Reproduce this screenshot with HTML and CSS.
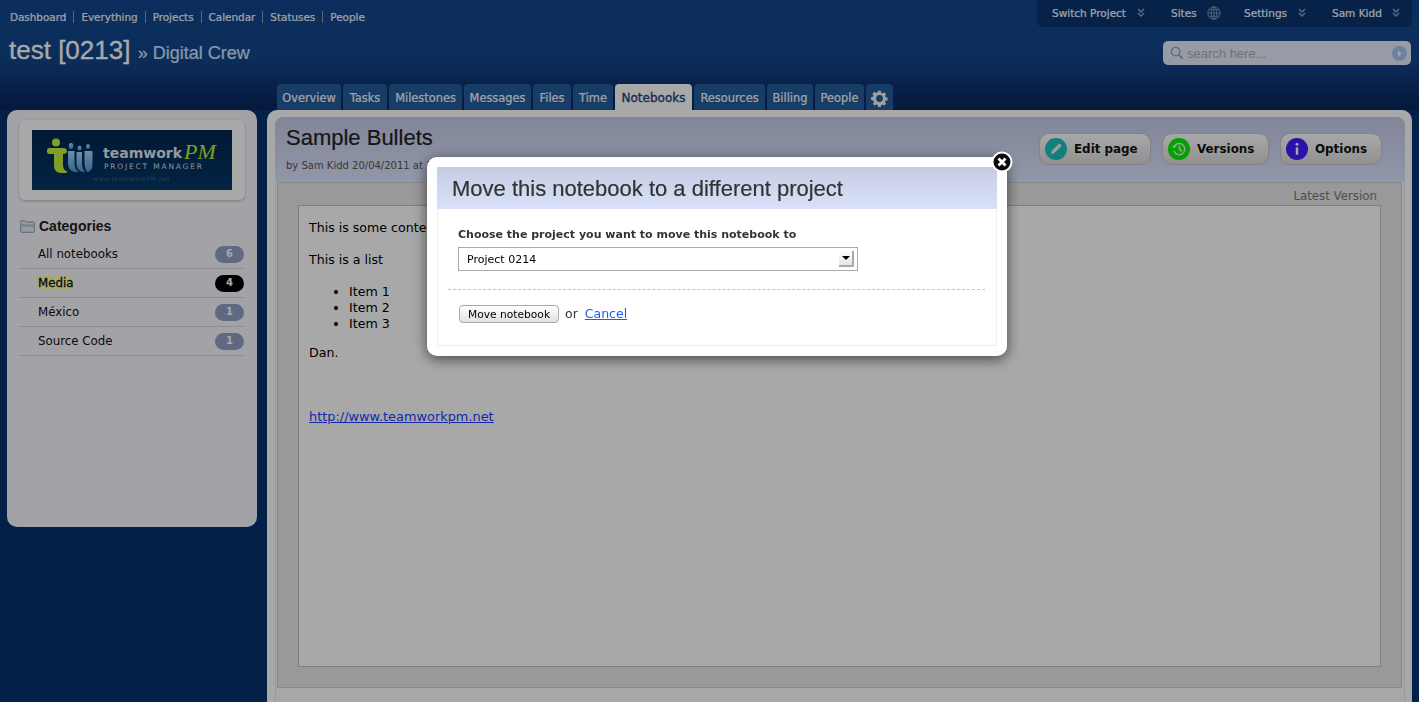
FILE: index.html
```html
<!DOCTYPE html>
<html lang="en">
<head>
<meta charset="utf-8">
<title>Move notebook</title>
<link rel="stylesheet" href="styles.css">
</head>
<body>
<div class="page">
  <header class="header">
    <div class="header-left">
      <nav class="topnav">
        <a>Dashboard</a><a>Everything</a><a>Projects</a><a>Calendar</a><a>Statuses</a><a>People</a>
      </nav>
      <div class="title">test [0213] <span class="title-sub">» Digital Crew</span></div>
    </div>
    <div class="header-right">
      <div class="userbar">
        <span class="ub ub-switch">Switch Project<svg class="chev" viewBox="0 0 8 10"><path d="M1 1l3 3 3-3M1 5l3 3 3-3" fill="none" stroke="#cfd6e2" stroke-width="1.4"/></svg></span>
        <span class="ub ub-sites">Sites<svg class="globe" viewBox="0 0 14 14"><g fill="none" stroke="#c2cad8" stroke-width=".8"><circle cx="7" cy="7" r="6.2"/><ellipse cx="7" cy="7" rx="2.8" ry="6.2"/><path d="M7 .8v12.4M.8 7h12.4M1.7 3.8h10.6M1.7 10.2h10.6"/></g></svg></span>
        <span class="ub ub-settings">Settings<svg class="chev" viewBox="0 0 8 10"><path d="M1 1l3 3 3-3M1 5l3 3 3-3" fill="none" stroke="#cfd6e2" stroke-width="1.4"/></svg></span>
        <span class="ub ub-user">Sam Kidd<svg class="chev" viewBox="0 0 8 10"><path d="M1 1l3 3 3-3M1 5l3 3 3-3" fill="none" stroke="#cfd6e2" stroke-width="1.4"/></svg></span>
      </div>
      <div class="search">
        <svg class="search-icon" viewBox="0 0 14 14"><circle cx="5.6" cy="5.6" r="4.3" fill="none" stroke="#8fa3c4" stroke-width="1.3"/><path d="M8.8 8.8l4 4" stroke="#8fa3c4" stroke-width="1.8"/></svg>
        <span class="search-text">search here...</span>
        <svg class="search-go" viewBox="0 0 14 14"><circle cx="7" cy="7" r="7" fill="#a7c2f2"/><path d="M5.6 4l3.4 3-3.4 3z" fill="#fff"/></svg>
      </div>
    </div>
  </header>

  <nav class="tabs">
    <a class="tab">Overview</a>
    <a class="tab">Tasks</a>
    <a class="tab">Milestones</a>
    <a class="tab">Messages</a>
    <a class="tab">Files</a>
    <a class="tab">Time</a>
    <a class="tab tab-active">Notebooks</a>
    <a class="tab">Resources</a>
    <a class="tab">Billing</a>
    <a class="tab">People</a>
    <a class="tab tab-gear"><svg viewBox="0 0 20 20"><path fill="#eef3fb" fill-rule="evenodd" d="M8.4 1h3.2l.5 2.4 1.5.6 2-1.3 2.2 2.2-1.3 2 .6 1.5 2.4.5v3.2l-2.4.5-.6 1.5 1.3 2-2.2 2.2-2-1.3-1.5.6-.5 2.4H8.4l-.5-2.4-1.5-.6-2 1.3-2.2-2.2 1.3-2-.6-1.5L0 11.6V8.4l2.4-.5.6-1.5-1.3-2 2.2-2.2 2 1.3 1.5-.6zM10 6a4 4 0 1 0 0 8 4 4 0 0 0 0-8z"/></svg></a>
  </nav>

  <main class="main">
    <aside class="sidebar">
      <div class="logo-card">
        <svg class="logo" viewBox="0 0 200 60">
          <defs>
            <linearGradient id="logobg" x1="0" y1="0" x2="0" y2="1"><stop offset="0" stop-color="#022650"/><stop offset="1" stop-color="#043766"/></linearGradient>
            <linearGradient id="logoblue" x1="0" y1="0" x2="0" y2="1"><stop offset="0" stop-color="#a8dcff"/><stop offset="1" stop-color="#4f98d0"/></linearGradient>
          </defs>
          <rect width="200" height="60" fill="url(#logobg)"/>
          <g fill="#bff03c">
            <circle cx="24" cy="12.5" r="4"/>
            <path d="M17 18h14c2.5 0 4 1 4 3s-1.5 3-4 3v11c0 3.5 1.5 5.5 4 6.5V43h-6c-4.5 0-7-3-7-7.5V24h-5c-1.500 0-2-1.500-2-3s.5-3 2-3z"/>
          </g>
          <g fill="url(#logoblue)">
            <ellipse cx="39" cy="16" rx="2.3" ry="3"/><ellipse cx="47.5" cy="18" rx="2" ry="2.6"/><ellipse cx="56" cy="16.5" rx="2" ry="2.6"/>
            <path d="M36 21h6.500v12c0 4 1.500 7 4 9h-3c-4.500 0-7.500-3.500-7.500-9z"/>
            <path d="M44.500 22h5.500v11c0 4 1 7 3 9h-1.500c-4 0-7-3.500-7-9z"/>
            <path d="M52.500 21h7c.5 0 1 .5 1 1v13c0 4-2.500 7-5.500 7-1.500-2.500-2.500-5-2.500-9z"/>
          </g>
          <text class="logo-main" x="71" y="28">teamwork</text>
          <text class="logo-pm" x="152" y="29">PM</text>
          <text class="logo-sub" x="72" y="39">PROJECT MANAGER</text>
          <text class="logo-url" x="61" y="51">www.teamworkPM.net</text>
        </svg>
      </div>
      <h2 class="cat-title">
        <svg class="folder" viewBox="0 0 15 13"><path d="M.7 3V1.600c0-.5.4-.9.9-.9h3.200l1.200 1.300h7.400c.5 0 .9.400.9.900v8.700c0 .5-.4.700-.9.700H1.600c-.5 0-.9-.3-.9-.7z" fill="#e6ecf4" stroke="#7fa0b4"/><path d="M1 4h13v3H1z" fill="#c3ccd8"/></svg>
        Categories
      </h2>
      <ul class="cat-list">
        <li class="cat"><span class="cat-name">All notebooks</span><span class="badge">6</span></li>
        <li class="cat"><span class="cat-name cat-current">Media</span><span class="badge badge-on">4</span></li>
        <li class="cat"><span class="cat-name">México</span><span class="badge">1</span></li>
        <li class="cat"><span class="cat-name">Source Code</span><span class="badge">1</span></li>
      </ul>
    </aside>

    <section class="content">
      <div class="content-head">
        <div>
          <h1 class="page-title">Sample Bullets</h1>
          <p class="byline">by Sam Kidd 20/04/2011 at 10:12</p>
        </div>
        <div class="actions">
          <a class="action"><svg class="action-icon" viewBox="0 0 22 22"><circle cx="11" cy="11" r="11" fill="#17c2b9"/><path d="M6 16.200l1-3.600 6.400-6.400c.6-.6 1.400-.6 2 0l.5.5c.6.6.6 1.400 0 2L9.500 15.100z" fill="#e9f5f3"/></svg>Edit page</a>
          <a class="action"><svg class="action-icon" viewBox="0 0 22 22"><circle cx="11" cy="11" r="11" fill="#06f206"/><g fill="none" stroke="#e2fbe2" stroke-width="1.500"><path d="M6.500 8a5.600 5.600 0 1 1-.6 5"/><path d="M11.500 7.500V11.500l2.500 1.500"/></g><path d="M4 7.500h5l-3 3z" fill="#e2fbe2"/></svg>Versions</a>
          <a class="action"><svg class="action-icon" viewBox="0 0 22 22"><circle cx="11" cy="11" r="11" fill="#3f1cff"/><circle cx="11" cy="6.300" r="1.500" fill="#fff"/><path d="M9.800 9.300h2.400v7.500H9.800z" fill="#fff"/></svg>Options</a>
        </div>
      </div>
      <div class="doc-wrap">
        <div class="doc-outer">
          <div class="latest">Latest Version</div>
          <article class="doc">
            <p>This is some content</p>
            <p>This is a list</p>
            <ul>
              <li>Item 1</li>
              <li>Item 2</li>
              <li>Item 3</li>
            </ul>
            <p>Dan.</p>
            <p class="doc-link"><a href="#">http://www.teamworkpm.net</a></p>
          </article>
        </div>
      </div>
    </section>
  </main>
</div>

<div class="overlay"></div>

<div class="dialog">
  <svg class="dialog-close" viewBox="0 0 22 22"><circle cx="11" cy="11" r="9.500" fill="#0a0a0a" stroke="#fff" stroke-width="2"/><path d="M7.500 7.500l7 7M14.500 7.500l-7 7" stroke="#fff" stroke-width="2.800"/></svg>
  <div class="dialog-inner">
    <h2 class="dialog-title">Move this notebook to a different project</h2>
    <div class="dialog-body">
      <label class="dialog-label" for="proj">Choose the project you want to move this notebook to</label>
      <div class="select-wrap">
        <select class="select" id="proj"><option>Project 0214</option></select>
        <span class="select-arrow"></span>
      </div>
    </div>
    <div class="dialog-foot">
      <button class="btn" type="button">Move notebook</button>
      <span class="or">or</span>
      <a class="cancel" href="#">Cancel</a>
    </div>
  </div>
</div>
</body>
</html>
```

FILE: styles.css
```css
* { box-sizing: border-box; }
html, body { margin: 0; padding: 0; height: 100%; }
body {
  overflow: hidden;
  font-family: "DejaVu Sans", sans-serif;
  font-size: 12px;
  color: #000;
  background: #05316f;
}
.page {
  height: 702px;
  display: flex;
  flex-direction: column;
  background: linear-gradient(#13478f 0, #124589 60px, #092b62 100px, #09275a 110px, #05316f 110px);
}

/* header */
.header { display: flex; justify-content: space-between; height: 84px; flex: none; }
.header-left { padding-left: 10px; }
.topnav {
  display: flex;
  padding-top: 11px;
  font-size: 10.4px;
  line-height: 12px;
  color: #f2f6ff;
  -webkit-text-stroke: .2px #f2f6ff;
}
.topnav a { padding-right: 7px; margin-right: 7px; border-right: 1px solid #8a9ab8; }
.topnav a:last-child { border-right: 0; }
.title {
  margin: 11px 0 0 -1px;
  font-family: "Liberation Sans", sans-serif;
  font-size: 26px;
  line-height: 32px;
  color: #fff;
  -webkit-text-stroke: .3px #fff;
}
.title-sub { font-size: 18px; color: #d2e4ff; -webkit-text-stroke: .2px #d2e4ff; }
.header-right { width: 375px; margin-right: 7px; display: flex; flex-direction: column; align-items: flex-end; }
.userbar {
  width: 375px;
  height: 27px;
  flex: none;
  display: flex;
  align-items: center;
  padding-bottom: 2px;
  background: #0b3470;
  border-radius: 0 0 6px 6px;
  font-size: 10.5px;
  color: #f4f8ff;
  -webkit-text-stroke: .2px #f4f8ff;
}
.ub { display: flex; align-items: center; }
.ub-switch { margin-left: 15px; width: 119px; }
.ub-sites { width: 73px; }
.ub-settings { width: 88px; }
.ub .chev { width: 8px; height: 10px; margin-left: auto; margin-right: 26px; opacity: .7; }
.ub-user { flex: 1; }
.ub-user .chev { margin-right: 12px; }
.globe { width: 14px; height: 14px; margin-left: 10px; opacity: .75; }
.search {
  width: 248px;
  height: 24px;
  margin-top: 14px;
  margin-right: 1px;
  display: flex;
  align-items: center;
  background: #e6ebfa;
  border-radius: 5px;
  padding: 0 4px 0 7px;
  font-family: "Liberation Sans", sans-serif;
  font-size: 13px;
  color: #ababab;
}
.search-icon { width: 14px; height: 14px; margin-right: 3px; }
.search-text { flex: 1; }
.search-go { width: 15px; height: 15px; }

/* tabs */
.tabs { display: flex; gap: 2px; height: 26px; flex: none; margin-left: 277px; }
.tab {
  display: flex;
  align-items: center;
  justify-content: center;
  padding-top: 2px;
  border-radius: 4px 4px 0 0;
  background: #245b9b;
  color: #f4f8ff;
  font-size: 11.4px;
  -webkit-text-stroke: .2px #f4f8ff;
}
.tab:nth-child(1) { width: 64px; }
.tab:nth-child(2) { width: 44px; }
.tab:nth-child(3) { width: 73px; }
.tab:nth-child(4) { width: 67px; }
.tab:nth-child(5) { width: 38px; }
.tab:nth-child(6) { width: 40px; }
.tab:nth-child(7) { width: 77px; }
.tab:nth-child(8) { width: 71px; }
.tab:nth-child(9) { width: 46px; }
.tab:nth-child(10) { width: 49px; }
.tab-active {
  background: #fff;
  color: #1b447c;
  font-size: 12px;
  -webkit-text-stroke: .35px #1b447c;
}
.tab-gear { width: 27px; }
.tab-gear svg { width: 17px; height: 17px; }

/* main */
.main { flex: 1; display: flex; align-items: flex-start; gap: 10px; padding: 0 7px; min-height: 0; }
.sidebar {
  width: 250px;
  height: 417px;
  flex: none;
  background: #f6f6fe;
  border-radius: 10px;
  padding: 10px 13px 10px 12px;
}
.logo-card {
  width: 226px;
  height: 80px;
  padding: 10px 13px;
  background: #fff;
  border-radius: 6px;
  box-shadow: 0 1px 3px rgba(0, 0, 0, .25);
}
.logo { display: block; width: 200px; height: 60px; }
.logo-main { font: bold 14px "DejaVu Sans", sans-serif; fill: #e3e9ef; }
.logo-pm { font: italic 22px "Liberation Serif", serif; fill: #bff03c; }
.logo-sub { font: 7.5px "DejaVu Sans", sans-serif; fill: #d5dde6; letter-spacing: 1.8px; }
.logo-url { font: 6px "DejaVu Sans", sans-serif; fill: #2f6488; letter-spacing: .6px; }
.cat-title {
  display: flex;
  align-items: center;
  gap: 5px;
  margin: 18px 0 0 1px;
  height: 16px;
  font: bold 14px "Liberation Sans", sans-serif;
  color: #222;
}
.folder { width: 15px; height: 13px; margin-right: -1px; }
.cat-list { list-style: none; margin: 6px 0 0; padding: 0; font-size: 11.8px; }
.cat {
  display: flex;
  justify-content: space-between;
  align-items: center;
  height: 29px;
  padding-left: 19px;
  border-bottom: 1px dotted #b9b9c2;
  color: #111;
}
.cat-current { background: #ffffb4; -webkit-text-stroke: .3px #111; }
.badge {
  width: 29px;
  height: 17px;
  border-radius: 9px;
  background: #90a0c5;
  color: #fff;
  font-size: 10px;
  font-weight: bold;
  line-height: 15px;
  text-align: center;
}
.badge-on { background: #000; }

/* content */
.content {
  flex: 1;
  height: 620px;
  display: flex;
  flex-direction: column;
  padding: 7px 7px 0 8px;
  background: #fff;
  border-radius: 10px 10px 0 0;
}
.content-head {
  height: 65px;
  flex: none;
  display: flex;
  justify-content: space-between;
  padding: 7px 23px 0 11px;
  background: linear-gradient(#c5cbe6, #dce6ff);
  border-radius: 8px 8px 0 0;
}
.page-title {
  margin: 0;
  font: 22px/27px "Liberation Sans", sans-serif;
  color: #222;
  -webkit-text-stroke: .2px #222;
}
.byline { margin: 9px 0 0; font-size: 10px; color: #555; }
.actions { display: flex; gap: 11px; padding-top: 9px; }
.action {
  height: 32px;
  display: flex;
  align-items: center;
  gap: 7px;
  padding-left: 5px;
  background: linear-gradient(#fff, #dcdcdc);
  border: 1px solid #c5c5cc;
  border-radius: 10px;
  font-size: 11.9px;
  font-weight: bold;
  color: #111;
}
.action:nth-child(1) { width: 112px; }
.action:nth-child(2) { width: 107px; }
.action:nth-child(3) { width: 102px; }
.action-icon { width: 22px; height: 22px; }
.doc-wrap { flex: 1; padding: 0 2px 0 1px; border: 1px solid #e6e6ee; border-top: 0; min-height: 0; }
.doc-outer {
  height: 506px;
  padding: 0 20px 20px;
  background: #e8e8e8;
  border: 1px solid #cfcfcf;
  display: flex;
  flex-direction: column;
}
.latest { height: 22px; line-height: 26px; padding-right: 4px; text-align: right; font-size: 11.8px; color: #777; }
.doc {
  flex: 1;
  padding: 14px 10px;
  background: #fff;
  border: 1px solid #bfbfbf;
  line-height: 16px;
  font-size: 12.6px;
}
.doc p { margin: 0 0 16px; }
.doc ul { margin: 0 0 13px; padding-left: 40px; }
.doc-link { padding-top: 32px; font-size: 12.9px; }
.doc a { color: #1f3cff; }

/* overlay + dialog */
.overlay { position: fixed; inset: 0; background: rgba(0, 0, 0, .34); }
.dialog {
  position: fixed;
  left: 427px;
  top: 157px;
  width: 580px;
  height: 199px;
  padding: 10px;
  background: #fff;
  border-radius: 10px;
  box-shadow: 0 3px 14px rgba(0, 0, 0, .6);
}
.dialog-close { position: absolute; right: -6px; top: -6px; width: 22px; height: 22px; }
.dialog-inner { height: 179px; border: 1px solid #eee; border-top: 0; }
.dialog-title {
  margin: 0 -1px;
  height: 42px;
  padding-left: 15px;
  background: linear-gradient(#c6cde2, #d9e2fb);
  font: 22px/43px "Liberation Sans", sans-serif;
  color: #333;
  -webkit-text-stroke: .2px #333;
}
.dialog-body { padding: 18px 20px 0; }
.dialog-label { display: block; font-size: 11px; line-height: 15px; font-weight: bold; color: #333; }
.select-wrap { position: relative; width: 400px; height: 24px; margin-top: 5px; }
.select {
  width: 100%;
  height: 100%;
  appearance: none;
  padding: 0 8px;
  border: 1px solid #aaa;
  border-radius: 0;
  background: #fff;
  font: 11px "DejaVu Sans", sans-serif;
  color: #000;
}
.select-arrow {
  position: absolute;
  right: 4px;
  top: 4px;
  width: 15px;
  height: 16px;
  background: linear-gradient(#fff, #e6e6e6);
  border-right: 2px solid #aaa;
  border-bottom: 2px solid #aaa;
}
.select-arrow::after {
  content: "";
  position: absolute;
  left: 3px;
  top: 5px;
  border: 4px solid transparent;
  border-top: 4px solid #000;
  border-bottom: 0;
}
.dialog-foot {
  display: flex;
  align-items: center;
  margin: 18px 11px 0 10px;
  padding: 15px 0 0 11px;
  border-top: 1px dashed #c4c4c4;
  font-size: 12.5px;
}
.btn {
  width: 100px;
  height: 18px;
  padding: 0;
  background: linear-gradient(#fff, #e2e2e2);
  border: 1px solid #aaa;
  border-radius: 4px;
  font: 10.7px "DejaVu Sans", sans-serif;
  color: #000;
}
.or { margin: 0 7px 0 6px; padding-bottom: 2px; color: #333; }
.cancel { padding-bottom: 2px; color: #1c5cff; }
```
